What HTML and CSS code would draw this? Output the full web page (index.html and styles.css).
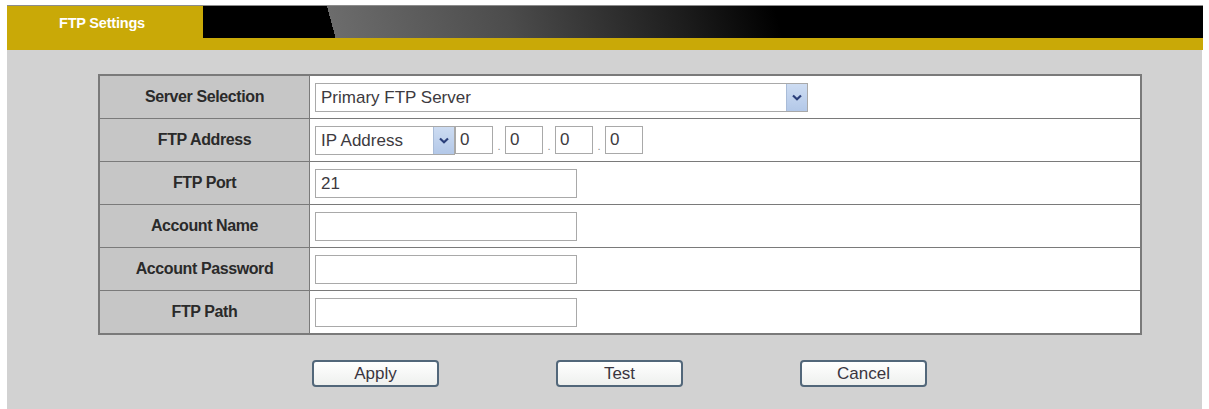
FILE: index.html
```html
<!DOCTYPE html>
<html>
<head>
<meta charset="utf-8">
<title>FTP Settings</title>
<link rel="stylesheet" href="styles.css">
</head>
<body>
<div class="page">
  <div class="header">
    <div class="tab">FTP Settings</div>
    <div class="band">
      <div class="band-dark"></div>
    </div>
  </div>
  <div class="panel">
    <table class="form">
      <tr>
        <th>Server Selection</th>
        <td>
          <div class="select wide">
            <span class="select-text">Primary FTP Server</span>
            <span class="arrow"><svg width="10" height="7" viewBox="0 0 10 7"><path d="M1 1.5 L5 5.2 L9 1.5" fill="none" stroke="#2b3f7a" stroke-width="2.2"/></svg></span>
          </div>
        </td>
      </tr>
      <tr>
        <th>FTP Address</th>
        <td>
          <div class="ip-row">
            <div class="select narrow">
              <span class="select-text">IP Address</span>
              <span class="arrow"><svg width="10" height="7" viewBox="0 0 10 7"><path d="M1 1.5 L5 5.2 L9 1.5" fill="none" stroke="#2b3f7a" stroke-width="2.2"/></svg></span>
            </div>
            <div class="ip">0</div>
            <span class="dot">.</span>
            <div class="ip">0</div>
            <span class="dot">.</span>
            <div class="ip">0</div>
            <span class="dot">.</span>
            <div class="ip">0</div>
          </div>
        </td>
      </tr>
      <tr>
        <th>FTP Port</th>
        <td><div class="text">21</div></td>
      </tr>
      <tr>
        <th>Account Name</th>
        <td><div class="text"></div></td>
      </tr>
      <tr>
        <th>Account Password</th>
        <td><div class="text"></div></td>
      </tr>
      <tr>
        <th>FTP Path</th>
        <td><div class="text"></div></td>
      </tr>
    </table>
    <div class="buttons">
      <button class="btn">Apply</button>
      <button class="btn">Test</button>
      <button class="btn">Cancel</button>
    </div>
  </div>
</div>
</body>
</html>
```
FILE: styles.css
```css
html, body {
  margin: 0;
  padding: 0;
  background: #ffffff;
}
.page {
  margin: 5px 6px 0 7px;
  font-family: "Liberation Sans", Arial, sans-serif;
}
.header {
  display: flex;
  height: 44px;
  border-top: 1px solid #8c8c8c;
  background: #c9a907;
}
.tab {
  width: 196px;
  box-sizing: border-box;
  padding-left: 52px;
  padding-top: 9px;
  color: #ffffff;
  font-weight: bold;
  font-size: 14.5px;
  letter-spacing: -0.2px;
}
.band {
  flex: 1;
  display: flex;
  flex-direction: column;
}
.band-dark {
  height: 32px;
  background: linear-gradient(75deg, #000 0, #000 128px, #6c6c6c 128px, #4c4c4c 300px, #1c1c1c 470px, #000 560px);
}
.panel {
  height: 359px;
  box-sizing: border-box;
  background: #d2d2d2;
  padding-top: 24px;
  margin-right: 1px;
}
.form {
  margin-left: 91px;
  width: 1044px;
  border-collapse: collapse;
  border: 2px solid #7a7a7a;
}
.form th, .form td {
  height: 42px;
  border: 1px solid #7a7a7a;
  padding: 0;
}
.form th {
  width: 209px;
  background: #c6c6c6;
  color: #2a2a2a;
  font-size: 16px;
  font-weight: bold;
  letter-spacing: -0.4px;
  text-align: center;
}
.form td {
  background: #ffffff;
  padding-left: 5px;
}
.select {
  display: flex;
  align-items: stretch;
  height: 29px;
  box-sizing: border-box;
  border: 1px solid #a9a9a9;
  background: #ffffff;
}
.select.wide {
  width: 493px;
}
.select.narrow {
  width: 140px;
}
.select-text {
  flex: 1;
  padding-left: 5px;
  font-size: 17px;
  line-height: 27px;
  color: #3d3a40;
}
.arrow {
  width: 20px;
  display: flex;
  align-items: center;
  justify-content: center;
  background: linear-gradient(#cddcf2, #b3c8e8);
  border-left: 1px solid #a9bcd8;
}
.ip-row {
  display: flex;
  align-items: center;
}
.ip {
  width: 38px;
  height: 28px;
  box-sizing: border-box;
  border: 1px solid #a9a9a9;
  background: #ffffff;
  font-size: 17px;
  line-height: 26px;
  padding-left: 4px;
  color: #3d3a40;
}
.dot {
  width: 12px;
  text-align: center;
  font-size: 11px;
  color: #888;
  align-self: flex-end;
  padding-bottom: 3px;
}
.text {
  width: 262px;
  height: 29px;
  box-sizing: border-box;
  border: 1px solid #a9a9a9;
  background: #ffffff;
  font-size: 17px;
  line-height: 27px;
  padding-left: 5px;
  color: #3d3a40;
}
.buttons {
  display: flex;
  gap: 117px;
  margin-left: 305px;
  margin-top: 25px;
}
.btn {
  width: 127px;
  height: 27px;
  box-sizing: border-box;
  border: 2px solid #52677a;
  border-radius: 4px;
  background: linear-gradient(#ffffff, #eef0ee);
  font-family: "Liberation Sans", Arial, sans-serif;
  font-size: 17px;
  color: #3a3540;
  padding: 0;
  line-height: 22px;
}
```
